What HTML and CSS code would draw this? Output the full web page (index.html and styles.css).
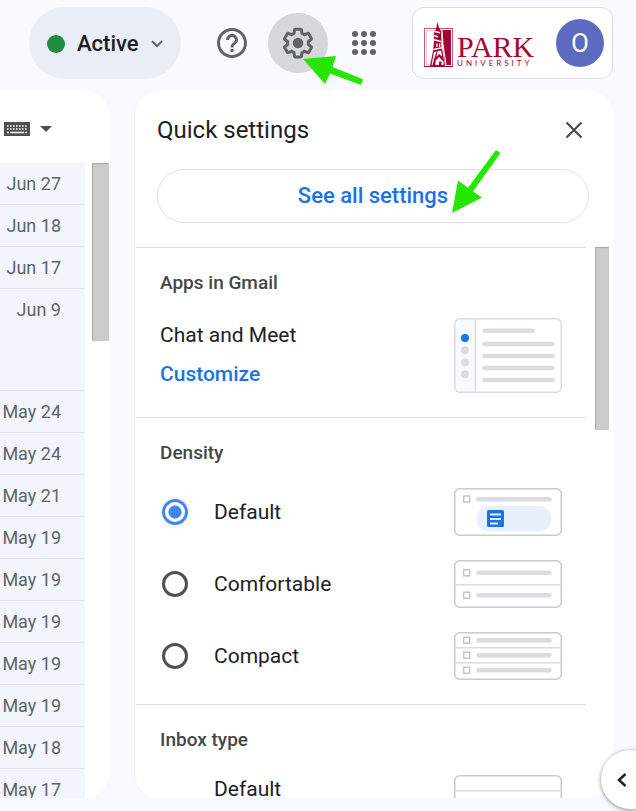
FILE: index.html
```html
<!DOCTYPE html>
<html lang="en">
<head>
<meta charset="utf-8">
<meta name="viewport" content="width=device-width, initial-scale=1">
<title>Mail - Quick settings</title>
<link rel="stylesheet" href="styles.css">
</head>
<body>
<header class="topbar">
  <button class="status" type="button">
    <span class="status-dot"></span>
    <span>Active</span>
    <svg class="status-chevron" viewBox="0 0 12 8" aria-hidden="true"><path d="M1 1.2l5 5 5-5"/></svg>
  </button>
  <nav class="tools" aria-label="Tools">
    <button class="tool" type="button" aria-label="Support">
      <svg viewBox="0 0 24 24"><path d="M11 18h2v-2h-2v2zm1-16C6.48 2 2 6.48 2 12s4.48 10 10 10 10-4.48 10-10S17.52 2 12 2zm0 18c-4.41 0-8-3.59-8-8s3.59-8 8-8 8 3.59 8 8-3.59 8-8 8zm0-14c-2.21 0-4 1.79-4 4h2c0-1.1.9-2 2-2s2 .9 2 2c0 2-3 1.75-3 5h2c0-2.25 3-2.5 3-5 0-2.21-1.79-4-4-4z"/></svg>
    </button>
    <button class="tool tool-active" type="button" aria-label="Settings">
      <svg viewBox="0 0 24 24"><path d="M13.85 22.25h-3.7c-.74 0-1.36-.54-1.45-1.27l-.27-1.89c-.27-.14-.53-.29-.79-.46l-1.8.72c-.7.26-1.47-.03-1.81-.65L2.2 15.53c-.35-.66-.2-1.44.36-1.88l1.53-1.19c-.01-.15-.02-.3-.02-.46 0-.15.01-.31.02-.46l-1.52-1.19c-.59-.45-.74-1.26-.37-1.88l1.85-3.19c.34-.62 1.11-.9 1.79-.63l1.81.73c.26-.17.52-.32.78-.46l.27-1.91c.09-.7.71-1.25 1.44-1.25h3.7c.74 0 1.36.54 1.45 1.27l.27 1.89c.27.14.53.29.79.46l1.8-.72c.71-.26 1.48.03 1.82.65l1.84 3.18c.36.66.2 1.44-.36 1.88l-1.52 1.19c.01.15.02.3.02.46s-.01.31-.02.46l1.52 1.19c.56.45.72 1.23.37 1.86l-1.86 3.22c-.34.62-1.11.9-1.8.63l-1.8-.72c-.26.17-.52.32-.78.46l-.27 1.91c-.1.68-.72 1.22-1.46 1.22zm-3.23-2h2.76l.37-2.55.53-.22c.44-.18.88-.44 1.34-.78l.45-.34 2.38.96 1.38-2.4-2.03-1.58.07-.56c.03-.26.06-.51.06-.78s-.03-.53-.06-.78l-.07-.56 2.03-1.58-1.39-2.4-2.39.96-.45-.35c-.42-.32-.87-.58-1.33-.77l-.52-.22-.37-2.55h-2.76l-.37 2.55-.53.21c-.44.19-.88.44-1.34.79l-.45.33-2.38-.95-1.39 2.39 2.03 1.58-.07.56a7 7 0 0 0-.06.79c0 .26.02.53.06.78l.07.56-2.03 1.58 1.38 2.4 2.39-.96.45.35c.43.33.86.58 1.33.77l.53.22.38 2.55z"/><circle cx="12" cy="12" r="3.5"/></svg>
    </button>
    <button class="tool" type="button" aria-label="Apps">
      <svg viewBox="0 0 24 24"><circle cx="6" cy="6" r="2"/><circle cx="12" cy="6" r="2"/><circle cx="18" cy="6" r="2"/><circle cx="6" cy="12" r="2"/><circle cx="12" cy="12" r="2"/><circle cx="18" cy="12" r="2"/><circle cx="6" cy="18" r="2"/><circle cx="12" cy="18" r="2"/><circle cx="18" cy="18" r="2"/></svg>
    </button>
  </nav>
  <div class="account">
    <div class="brand">
      <svg class="brand-tower" viewBox="0 0 30 46" aria-hidden="true">
        <rect x=".5" y="6.500" width="28" height="38" fill="#fff" stroke="#c65a74"/>
        <rect x="2.500" y="8.500" width="24" height="34" fill="#fff" stroke="#e3b3bf" stroke-width=".7"/>
        <path d="M17.500 8H27v35h-6z" fill="#a90533"/>
        <path d="M13.500 0l1.500 6 2 3 .5 9-.5 4 1.500 7 2.500 15H6l3-15 1-9v-9l2-4z" fill="#a90533"/>
        <path d="M11 9.500l5 1.300M10.300 13.500l3.500 1.500M10 17.800l7 1.700M9.500 27.500l8.500-1.700" stroke="#fff" stroke-width="1.600" fill="none"/>
        <path d="M12.200 21.500h1.300v3.500h-1.300zM15 21.500h1.300v3.500H15zM10 30l2.500-.5-2 6-2 7.500H7.600zM13.500 29.200l3.500-.7 1.200 6-3.200-2.500-2.700 3zM11.500 43v-4l3.500-4 4.500 4.500V43h-2v-3.500h-2.500V43z" fill="#fff"/>
        <path d="M18 8l1 14 3 21" stroke="#fff" stroke-width="1" fill="none"/>
        <path d="M0 44.500h29" stroke="#a90533"/>
      </svg>
      <div class="brand-text">
        <span class="brand-name">PARK</span>
        <span class="brand-sub">UNIVERSITY</span>
      </div>
    </div>
    <button class="avatar" type="button">O</button>
  </div>
</header>

<main class="workspace">
  <section class="mail" aria-label="Messages">
    <div class="mail-tools">
      <button class="input-tool" type="button" aria-label="Input tools">
        <svg class="keyboard" viewBox="0 0 26 16"><path d="M0 1h26v14H0z" fill="#505050"/><path d="M3 5h20M3 8h20" stroke="#fff" stroke-width="1.600" stroke-dasharray="1.600 1.400"/><path d="M3 11.500h2M6 11.500h14M21 11.500h2" stroke="#fff" stroke-width="1.500"/></svg>
        <svg class="caret" viewBox="0 0 12 6"><path d="M0 0h12L6 6z" fill="#505050"/></svg>
      </button>
    </div>
    <div class="mail-body">
      <ul class="dates">
        <li>Jun 27</li>
        <li>Jun 18</li>
        <li>Jun 17</li>
        <li class="tall">Jun 9</li>
        <li>May 24</li>
        <li>May 24</li>
        <li>May 21</li>
        <li>May 19</li>
        <li>May 19</li>
        <li>May 19</li>
        <li>May 19</li>
        <li>May 19</li>
        <li>May 18</li>
        <li>May 17</li>
      </ul>
      <div class="thumb thumb-mail"></div>
    </div>
  </section>

  <aside class="panel" aria-label="Quick settings">
    <div class="panel-head">
      <h1>Quick settings</h1>
      <button class="close" type="button" aria-label="Close"><svg viewBox="0 0 18 18"><path d="M1.500 1.500l15 15M16.500 1.500l-15 15"/></svg></button>
    </div>
    <button class="all-settings" type="button">See all settings</button>
    <div class="panel-scroll">
      <div class="groups">
        <section class="group">
          <h2>Apps in Gmail</h2>
          <div class="apps">
            <div class="apps-text">
              <span>Chat and Meet</span>
              <a href="#customize">Customize</a>
            </div>
            <svg class="preview-app" viewBox="0 0 108 75" aria-hidden="true">
              <path d="M5 1h16v73H5a4 4 0 0 1-4-4V5a4 4 0 0 1 4-4z" fill="#f8f9fa"/>
              <path d="M21.500 1v73" stroke="#dadce0" stroke-width="1.500"/>
              <rect x=".75" y=".75" width="106.500" height="73.500" rx="5" fill="none" stroke="#dadce0" stroke-width="1.500"/>
              <circle cx="11" cy="20" r="4" fill="#1a73e8"/>
              <g fill="#dadce0"><circle cx="11" cy="32.200" r="4"/><circle cx="11" cy="44.200" r="4"/><circle cx="11" cy="56.200" r="4"/></g>
              <path d="M30.500 12.700h48M30.500 26h68M30.500 38h68M30.500 50h68M30.500 62h68" stroke="#dadce0" stroke-width="4.500" stroke-linecap="round"/>
            </svg>
          </div>
        </section>
        <section class="group">
          <h2>Density</h2>
          <label class="option">
            <input type="radio" name="density" checked>
            <span>Default</span>
            <svg class="preview" viewBox="0 0 108 48" aria-hidden="true">
              <rect x=".75" y=".75" width="106.500" height="46.500" rx="5" fill="#fff" stroke="#c7cad0" stroke-width="1.500"/>
              <rect x="9.700" y="8" width="6" height="6" fill="none" stroke="#c2c4c7" stroke-width="1.400"/>
              <path d="M24.500 11.200h71" stroke="#dadce0" stroke-width="4.500" stroke-linecap="round"/>
              <rect x="22.500" y="18" width="75" height="25.500" rx="12.700" fill="#e8f0fe"/>
              <rect x="33" y="22" width="17" height="17" rx="1.500" fill="#1a73e8"/>
              <path d="M36 26.500h11M36 31h11M36 35.500h8" stroke="#e8f0fe" stroke-width="2"/>
            </svg>
          </label>
          <label class="option">
            <input type="radio" name="density">
            <span>Comfortable</span>
            <svg class="preview" viewBox="0 0 108 48" aria-hidden="true">
              <rect x=".75" y=".75" width="106.500" height="46.500" rx="5" fill="#fff" stroke="#c7cad0" stroke-width="1.500"/>
              <path d="M1 24.700h106" stroke="#dadce0" stroke-width="1.500"/>
              <path d="M9.700 9.700h6v6h-6zM9.700 32.200h6v6h-6z" fill="none" stroke="#c2c4c7" stroke-width="1.400"/>
              <path d="M24.500 12.700h71M24.500 35.200h71" stroke="#dadce0" stroke-width="4.500" stroke-linecap="round"/>
            </svg>
          </label>
          <label class="option">
            <input type="radio" name="density">
            <span>Compact</span>
            <svg class="preview" viewBox="0 0 108 48" aria-hidden="true">
              <rect x=".75" y=".75" width="106.500" height="46.500" rx="5" fill="#fff" stroke="#c7cad0" stroke-width="1.500"/>
              <path d="M1 15.700h106M1 30.700h106" stroke="#dadce0" stroke-width="1.500"/>
              <path d="M9.700 5.200h6v6h-6zM9.700 20.200h6v6h-6zM9.700 35.200h6v6h-6z" fill="none" stroke="#c2c4c7" stroke-width="1.400"/>
              <path d="M24.500 8.200h71M24.500 23.200h71M24.500 38.200h71" stroke="#dadce0" stroke-width="4.500" stroke-linecap="round"/>
            </svg>
          </label>
        </section>
        <section class="group">
          <h2>Inbox type</h2>
          <label class="option option-top">
            <input type="radio" name="inbox">
            <span>Default</span>
            <svg class="preview" viewBox="0 0 108 48" aria-hidden="true">
              <rect x=".75" y=".75" width="106.500" height="46.500" rx="5" fill="#fff" stroke="#c7cad0" stroke-width="1.500"/>
              <path d="M1 15.700h106M1 30.700h106" stroke="#dadce0" stroke-width="1.500"/>
            </svg>
          </label>
        </section>
      </div>
      <div class="thumb thumb-panel"></div>
    </div>
  </aside>
</main>

<button class="side-toggle" type="button" aria-label="Show side panel"><svg viewBox="0 0 10 14"><path d="M8.500 1L2 7l6.500 6"/></svg></button>

<svg class="pointer pointer-gear" viewBox="0 0 60 29" aria-hidden="true"><path d="M0 4L33 1l-3.500 11 30.500 12.300-2 5.700-31-11.500L22 29z"/></svg>
<svg class="pointer pointer-all" viewBox="0 0 49 63" aria-hidden="true"><path d="M0 63l6-32.500 10 7.200L44 0l4.500 3L21 41.500l9 6z"/></svg>
</body>
</html>
```
FILE: styles.css
```css
* { box-sizing: border-box; }

body {
  margin: 0;
  height: 100vh;
  display: flex;
  flex-direction: column;
  position: relative;
  overflow: hidden;
  background: #f8faff;
  color: #202124;
  font-family: Roboto, "Liberation Sans", sans-serif;
  font-size: 21px;
  line-height: 28px;
}

button {
  margin: 0;
  padding: 0;
  border: 0;
  background: none;
  color: inherit;
  font: inherit;
  cursor: pointer;
}

svg { display: block; flex: none; }

/* Top bar */
.topbar {
  display: flex;
  align-items: center;
  padding: 7px 23px 12px 29px;
}

.status {
  display: flex;
  align-items: center;
  gap: 12px;
  height: 72px;
  padding: 2px 18px 0;
  border-radius: 36px;
  background: #e9eef6;
  font-size: 22px;
  font-weight: 500;
}
.status-dot {
  width: 18px;
  height: 18px;
  border-radius: 50%;
  background: #1e8e3e;
}
.status-chevron {
  width: 12px;
  height: 8px;
  fill: none;
  stroke: #5f6368;
  stroke-width: 2;
}

.tools {
  display: flex;
  gap: 6px;
  margin: 0 18px 0 auto;
}
.tool {
  display: grid;
  place-items: center;
  width: 60px;
  height: 60px;
  border-radius: 50%;
}
.tool svg {
  width: 36px;
  height: 36px;
  fill: #5f6368;
}
.tool-active { background: #d5d7db; }

.account {
  display: flex;
  align-items: center;
  justify-content: space-between;
  width: 201px;
  height: 72px;
  padding: 0 8px 0 11px;
  border: 1px solid #dadce0;
  border-radius: 12px;
  background: #fff;
}
.brand {
  display: flex;
  align-items: center;
  gap: 3px;
  padding-top: 4px;
  color: #a90533;
}
.brand-tower { width: 30px; height: 46px; }
.brand-text {
  display: flex;
  flex-direction: column;
  padding-top: 12px;
}
.brand-name {
  font-family: "Liberation Serif", serif;
  font-size: 30px;
  line-height: 24px;
}
.brand-sub {
  font-family: Lato, sans-serif;
  font-size: 8px;
  line-height: 8px;
  letter-spacing: 3px;
}
.avatar {
  width: 48px;
  height: 48px;
  border-radius: 50%;
  background: #5c6bc0;
  color: #fff;
  font-size: 26px;
}

/* Workspace */
.workspace {
  display: flex;
  flex: 1;
  min-height: 0;
  gap: 25px;
  padding: 0 23px 13px 0;
}

.mail {
  display: flex;
  flex-direction: column;
  width: 109px;
  overflow: hidden;
  border-radius: 0 24px 24px 0;
  background: #fff;
}
.mail-tools {
  display: flex;
  flex: none;
  align-items: center;
  height: 72px;
  padding: 4px 0 0 4px;
}
.input-tool {
  display: flex;
  align-items: center;
  gap: 10px;
}
.keyboard { width: 26px; height: 16px; }
.caret { width: 12px; height: 6px; }
.mail-body {
  display: flex;
  justify-content: space-between;
  align-items: flex-start;
}
.dates {
  width: 85px;
  margin: 0;
  padding: 0;
  list-style: none;
  background: #f2f6fc;
  color: #5f6368;
  font-size: 18px;
  line-height: 41px;
}
.dates li {
  height: 42px;
  padding-right: 24px;
  border-bottom: 1px solid #dfe4ec;
  text-align: right;
  white-space: nowrap;
}
.dates .tall { height: 102px; }

.thumb {
  background: #cbcbcb;
  box-shadow: inset 1px 1px 1px #a8a8a8;
}
.thumb-mail { width: 17px; height: 178px; }
.thumb-panel { width: 14px; height: 183px; margin-right: 4px; }

/* Quick settings */
.panel {
  display: flex;
  flex: 1;
  flex-direction: column;
  min-width: 0;
  overflow: hidden;
  border-left: 1px solid #f1f3f6;
  border-radius: 24px;
  background: #fff;
}
.panel-head {
  display: flex;
  flex: none;
  align-items: center;
  justify-content: space-between;
  height: 78px;
  padding: 0 30px 0 22px;
}
h1, h2 { margin: 0; font-weight: 400; }
h1 { font-size: 24px; }
.close svg {
  width: 18px;
  height: 18px;
  fill: none;
  stroke: #444746;
  stroke-width: 2;
}
.all-settings {
  flex: none;
  height: 54px;
  margin: 0 24px 24px 22px;
  border: 1px solid #e0e0e0;
  border-radius: 27px;
  color: #1a73e8;
  font-size: 22px;
  font-weight: 500;
}
.panel-scroll {
  display: flex;
  flex: 1;
  min-height: 0;
  align-items: flex-start;
  gap: 9px;
  padding-left: 1px;
}
.groups { flex: 1; }
.group {
  padding: 21px 24px 12px;
  border-top: 1px solid #e0e0e0;
}
h2 {
  color: #444746;
  font-size: 19px;
  font-weight: 500;
}
.apps {
  display: flex;
  justify-content: space-between;
  padding: 21px 0 12px;
}
.apps-text {
  display: flex;
  flex-direction: column;
  gap: 11px;
  padding-top: 3px;
}
.apps-text a {
  color: #1a73e8;
  font-weight: 500;
  text-decoration: none;
}
.preview-app { width: 108px; height: 75px; }

.option {
  display: flex;
  align-items: center;
  height: 72px;
}
.group h2 + .option { margin-top: 9px; }
.option input {
  appearance: none;
  flex: none;
  width: 26px;
  height: 26px;
  margin: 0 26px 0 2px;
  border: 3px solid #505050;
  border-radius: 50%;
}
.option input:checked {
  border-color: #4285f4;
  background: radial-gradient(circle, #4285f4 6px, transparent 7px);
}
.option span { flex: 1; }
.preview { width: 108px; height: 48px; }
.group h2 + .option-top { margin-top: 21px; }
.option-top span,
.option-top .preview { align-self: flex-start; }

/* Floating items */
.side-toggle {
  position: absolute;
  right: -24px;
  bottom: 2px;
  width: 59px;
  height: 59px;
  padding-left: 16px;
  border-radius: 50%;
  background: #fff;
  box-shadow: 0 1px 4px rgba(60, 64, 67, .6);
}
.side-toggle svg {
  width: 10px;
  height: 14px;
  fill: none;
  stroke: #202124;
  stroke-width: 2.5;
}

.pointer { position: absolute; fill: #26e600; overflow: visible; }
.pointer-gear { left: 303px; top: 55px; width: 60px; height: 29px; }
.pointer-all { left: 452px; top: 150px; width: 49px; height: 63px; }
```
